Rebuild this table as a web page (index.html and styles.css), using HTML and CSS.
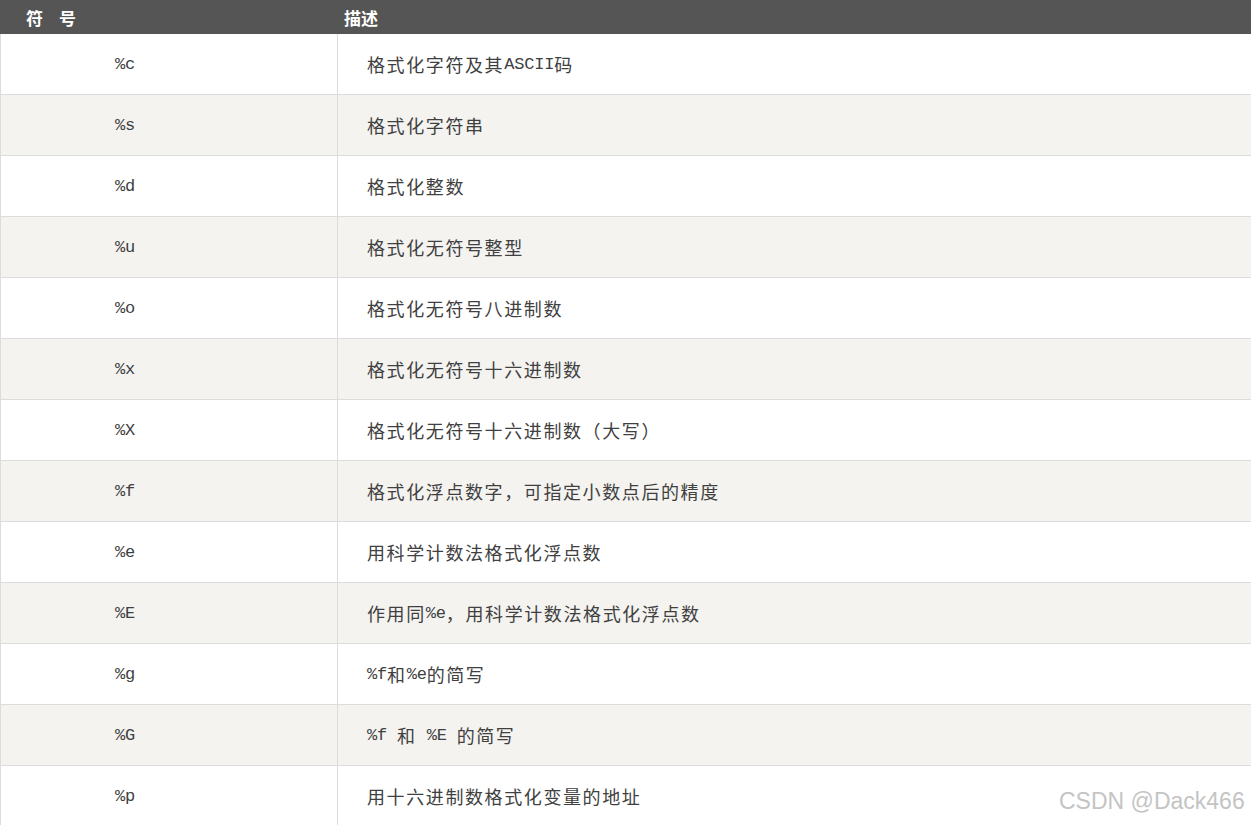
FILE: index.html
```html
<!DOCTYPE html>
<html lang="zh-CN">
<head>
<meta charset="utf-8">
<title>格式化符号</title>
<link rel="stylesheet" href="styles.css">
</head>
<body>
<div class="table">
  <div class="head">
    <div class="h-sym">符　号</div>
    <div class="h-desc">描述</div>
  </div>
  <div class="row"><div class="sym">%c</div><div class="desc">格式化字符及其<span class="en">ASCII</span>码</div></div>
  <div class="row alt"><div class="sym">%s</div><div class="desc">格式化字符串</div></div>
  <div class="row"><div class="sym">%d</div><div class="desc">格式化整数</div></div>
  <div class="row alt"><div class="sym">%u</div><div class="desc">格式化无符号整型</div></div>
  <div class="row"><div class="sym">%o</div><div class="desc">格式化无符号八进制数</div></div>
  <div class="row alt"><div class="sym">%x</div><div class="desc">格式化无符号十六进制数</div></div>
  <div class="row"><div class="sym">%X</div><div class="desc">格式化无符号十六进制数（大写）</div></div>
  <div class="row alt"><div class="sym">%f</div><div class="desc">格式化浮点数字，可指定小数点后的精度</div></div>
  <div class="row"><div class="sym">%e</div><div class="desc">用科学计数法格式化浮点数</div></div>
  <div class="row alt"><div class="sym">%E</div><div class="desc">作用同<span class="en">%e</span>，用科学计数法格式化浮点数</div></div>
  <div class="row"><div class="sym">%g</div><div class="desc"><span class="en">%f</span>和<span class="en">%e</span>的简写</div></div>
  <div class="row alt"><div class="sym">%G</div><div class="desc"><span class="en">%f </span>和<span class="en"> %E </span>的简写</div></div>
  <div class="row"><div class="sym">%p</div><div class="desc">用十六进制数格式化变量的地址</div></div>
</div>
<div class="watermark">CSDN @Dack466</div>
</body>
</html>
```
FILE: styles.css
```css
html, body {
  margin: 0;
  padding: 0;
  background: #ffffff;
  overflow: hidden;
}
body {
  width: 1251px;
  height: 825px;
  position: relative;
  font-family: "Noto Sans CJK SC", sans-serif;
}
.table {
  width: 1270px;
}
.head {
  display: flex;
  height: 34px;
  background: #555555;
  color: #ffffff;
  font-weight: bold;
  font-size: 17px;
  align-items: center;
}
.h-sym {
  width: 338px;
  padding-left: 26px;
  box-sizing: border-box;
  letter-spacing: -0.5px;
}
.h-desc {
  padding-left: 6px;
}
.row {
  display: flex;
  height: 60px;
  border-left: 1px solid #dcdcdc;
  border-bottom: 1px solid #dcdcdc;
  background: #ffffff;
  color: #404040;
}
.row.alt {
  background: #f4f3f0;
}
.sym {
  width: 337px;
  flex: none;
  box-sizing: border-box;
  border-right: 1px solid #dcdcdc;
  padding-left: 114px;
  display: flex;
  align-items: center;
  font-family: "Liberation Mono", monospace;
  font-size: 17px;
  letter-spacing: -0.2px;
}
.desc {
  display: flex;
  align-items: center;
  padding-left: 29px;
  font-size: 18px;
  letter-spacing: 1.6px;
  white-space: pre;
}
.en {
  font-family: "Liberation Mono", monospace;
  font-size: 17px;
  letter-spacing: -0.2px;
}
.watermark {
  position: absolute;
  left: 1059px;
  top: 788px;
  font-family: "Liberation Sans", Arial, sans-serif;
  font-size: 23px;
  color: #c4c4c4;
  text-shadow: 0 0 1px #ffffff, 1px 1px 1px #ffffff;
  white-space: nowrap;
}
```
